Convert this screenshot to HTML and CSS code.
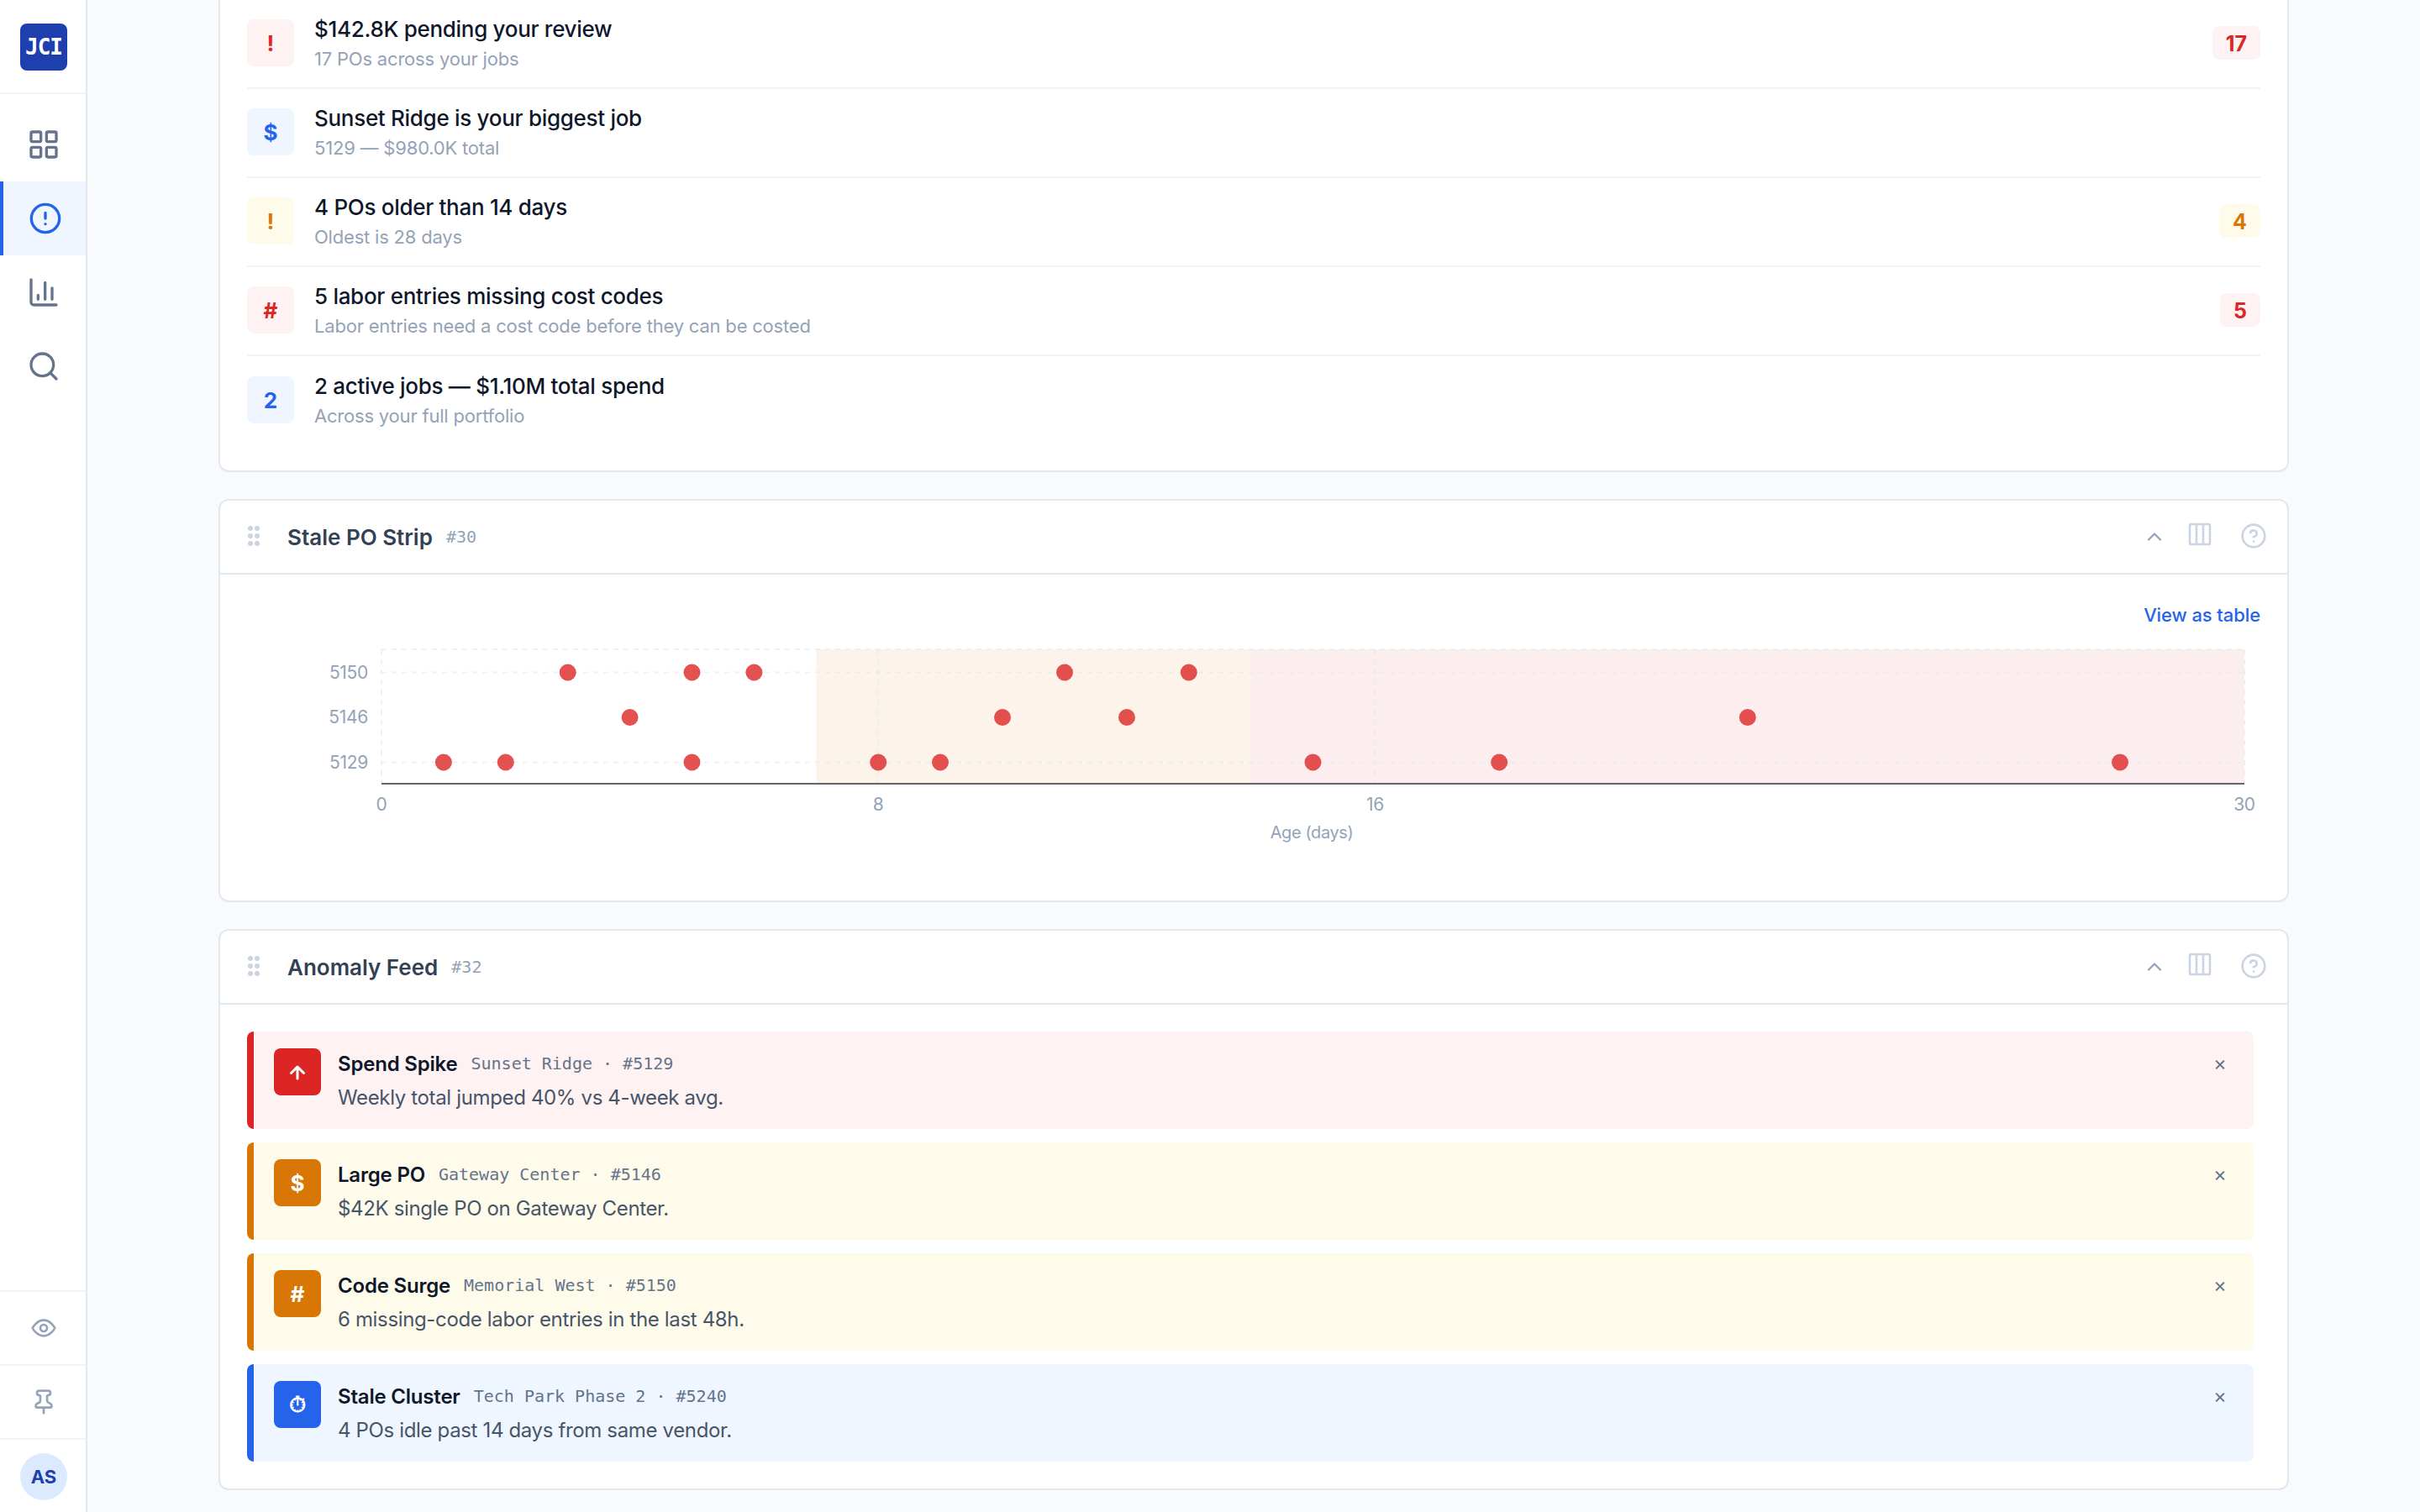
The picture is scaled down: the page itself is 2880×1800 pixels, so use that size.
FILE: index.html
```html
<!DOCTYPE html>
<html lang="en">
<head>
<meta charset="utf-8">
<title>Alerts</title>
<link rel="stylesheet" href="styles.css">
</head>
<body>
<div class="app">
  <aside class="sidebar">
    <div class="brand"><div class="logo">JCI</div></div>
    <nav class="nav">
      <a class="nav-item"><svg class="ico" viewBox="0 0 24 24"><rect x="3" y="3" width="7" height="7" rx="1"/><rect x="14" y="3" width="7" height="7" rx="1"/><rect x="3" y="14" width="7" height="7" rx="1"/><rect x="14" y="14" width="7" height="7" rx="1"/></svg></a>
      <a class="nav-item active"><svg class="ico" viewBox="0 0 24 24"><circle cx="12" cy="12" r="10"/><path d="M12 8v4M12 16h.01"/></svg></a>
      <a class="nav-item"><svg class="ico" viewBox="0 0 24 24"><path d="M3 3v16a2 2 0 0 0 2 2h16M8 17v-3M13 17V5M18 17V9"/></svg></a>
      <a class="nav-item"><svg class="ico" viewBox="0 0 24 24"><circle cx="11" cy="11" r="8"/><path d="m21 21-4.3-4.3"/></svg></a>
    </nav>
    <div class="side-foot">
      <div class="foot-item"><svg class="ico-s" viewBox="0 0 24 24"><path d="M2 12s3.6-7 10-7 10 7 10 7-3.6 7-10 7-10-7-10-7Z"/><circle cx="12" cy="12" r="3"/></svg></div>
      <div class="foot-item"><svg class="ico-s" viewBox="0 0 24 24"><path d="M12 17v5M9 10.8a2 2 0 0 1-1.1 1.8l-1.8.9A2 2 0 0 0 5 15.2V16a1 1 0 0 0 1 1h12a1 1 0 0 0 1-1v-.8a2 2 0 0 0-1.1-1.8l-1.8-.9a2 2 0 0 1-1.1-1.8V7a1 1 0 0 1 1-1 2 2 0 0 0 0-4H8a2 2 0 0 0 0 4 1 1 0 0 1 1 1Z"/></svg></div>
      <div class="foot-user"><div class="avatar">AS</div></div>
    </div>
  </aside>
  <main class="main">
    <section class="card card-top">
      <div class="insights">
        <div class="insight"><div class="chip chip-red">!</div><div class="ins-text"><div class="ins-title">$142.8K pending your review</div><div class="ins-sub">17 POs across your jobs</div></div><div class="badge badge-red">17</div></div>
        <div class="insight"><div class="chip chip-blue">$</div><div class="ins-text"><div class="ins-title">Sunset Ridge is your biggest job</div><div class="ins-sub">5129 — $980.0K total</div></div></div>
        <div class="insight"><div class="chip chip-amber">!</div><div class="ins-text"><div class="ins-title">4 POs older than 14 days</div><div class="ins-sub">Oldest is 28 days</div></div><div class="badge badge-amber">4</div></div>
        <div class="insight"><div class="chip chip-red">#</div><div class="ins-text"><div class="ins-title">5 labor entries missing cost codes</div><div class="ins-sub">Labor entries need a cost code before they can be costed</div></div><div class="badge badge-red">5</div></div>
        <div class="insight"><div class="chip chip-blue">2</div><div class="ins-text"><div class="ins-title">2 active jobs — $1.10M total spend</div><div class="ins-sub">Across your full portfolio</div></div></div>
      </div>
    </section>

    <section class="card">
      <header class="card-head">
        <span class="grip"><i></i><i></i><i></i><i></i><i></i><i></i></span>
        <h2 class="card-title">Stale PO Strip</h2><span class="card-id">#30</span>
        <div class="head-tools">
          <svg class="tool-chev" viewBox="0 0 24 24"><path d="m6 15 6-6 6 6"/></svg>
          <svg class="tool-cols" viewBox="0 0 24 24"><rect x="3" y="3" width="18" height="18" rx="1"/><path d="M9 3v18M15 3v18"/></svg>
          <svg class="tool-help" viewBox="0 0 24 24"><circle cx="12" cy="12" r="10"/><path d="M9.1 9a3 3 0 0 1 5.8 1c0 2-3 3-3 3M12 17h.01"/></svg>
        </div>
      </header>
      <div class="chart-body">
        <a class="table-link">View as table</a>
        <svg class="strip" viewBox="0 0 2217 270" width="2217" height="270">
          <rect class="band-amber" x="517.4" y="0" width="517.3" height="160"/>
          <rect class="band-red" x="1034.7" y="0" width="1182.3" height="160"/>
          <g class="grid">
            <path d="M0 0H2217M0 27.5H2217M0 134.5H2217"/>
            <path d="M0 0V160M591.2 0V160M1182.4 0V160M2217 0V160"/>
          </g>
          <path class="axis" d="M0 160H2217"/>
          <g class="labels">
            <text x="-16" y="35" class="end">5150</text>
            <text x="-16" y="88" class="end">5146</text>
            <text x="-16" y="142" class="end">5129</text>
            <text x="0" y="192" class="mid">0</text>
            <text x="591.2" y="192" class="mid">8</text>
            <text x="1182.4" y="192" class="mid">16</text>
            <text x="2217" y="192" class="mid">30</text>
            <text x="1107" y="225" class="mid age">Age (days)</text>
          </g>
          <g class="dots">
            <circle cx="221.7" cy="27.5" r="10"/><circle cx="369.5" cy="27.5" r="10"/><circle cx="443.4" cy="27.5" r="10"/><circle cx="813" cy="27.5" r="10"/><circle cx="960.8" cy="27.5" r="10"/>
            <circle cx="295.6" cy="81" r="10"/><circle cx="739" cy="81" r="10"/><circle cx="887" cy="81" r="10"/><circle cx="1625.8" cy="81" r="10"/>
            <circle cx="73.9" cy="134.5" r="10"/><circle cx="147.8" cy="134.5" r="10"/><circle cx="369.5" cy="134.5" r="10"/><circle cx="591.2" cy="134.5" r="10"/><circle cx="665" cy="134.5" r="10"/><circle cx="1108.5" cy="134.5" r="10"/><circle cx="1330.2" cy="134.5" r="10"/><circle cx="2069" cy="134.5" r="10"/>
          </g>
        </svg>
      </div>
    </section>

    <section class="card">
      <header class="card-head">
        <span class="grip"><i></i><i></i><i></i><i></i><i></i><i></i></span>
        <h2 class="card-title">Anomaly Feed</h2><span class="card-id">#32</span>
        <div class="head-tools">
          <svg class="tool-chev" viewBox="0 0 24 24"><path d="m6 15 6-6 6 6"/></svg>
          <svg class="tool-cols" viewBox="0 0 24 24"><rect x="3" y="3" width="18" height="18" rx="1"/><path d="M9 3v18M15 3v18"/></svg>
          <svg class="tool-help" viewBox="0 0 24 24"><circle cx="12" cy="12" r="10"/><path d="M9.1 9a3 3 0 0 1 5.8 1c0 2-3 3-3 3M12 17h.01"/></svg>
        </div>
      </header>
      <div class="feed">
        <article class="alert alert-red"><div class="alert-ico"><svg class="arrow" viewBox="0 0 24 24"><path d="M12 20V6M4.5 13.5 12 6l7.5 7.5"/></svg></div><div class="alert-text"><div class="alert-head"><strong>Spend Spike</strong><span class="meta">Sunset Ridge · #5129</span></div><p>Weekly total jumped 40% vs 4-week avg.</p></div><span class="close">×</span></article>
        <article class="alert alert-amber"><div class="alert-ico">$</div><div class="alert-text"><div class="alert-head"><strong>Large PO</strong><span class="meta">Gateway Center · #5146</span></div><p>$42K single PO on Gateway Center.</p></div><span class="close">×</span></article>
        <article class="alert alert-amber"><div class="alert-ico">#</div><div class="alert-text"><div class="alert-head"><strong>Code Surge</strong><span class="meta">Memorial West · #5150</span></div><p>6 missing-code labor entries in the last 48h.</p></div><span class="close">×</span></article>
        <article class="alert alert-blue"><div class="alert-ico">⏱</div><div class="alert-text"><div class="alert-head"><strong>Stale Cluster</strong><span class="meta">Tech Park Phase 2 · #5240</span></div><p>4 POs idle past 14 days from same vendor.</p></div><span class="close">×</span></article>
      </div>
    </section>
  </main>
</div>
</body>
</html>
```
FILE: styles.css
```css
* { box-sizing: border-box; }
html, body { margin: 0; height: 100%; overflow: hidden; }
body { font-family: Inter, "Noto Sans", sans-serif; background: #f8fafc; color: #0f172a; }
.app { display: flex; height: 1800px; }

.sidebar { width: 104px; flex: none; background: #fff; border-right: 2px solid #e2e8f0; display: flex; flex-direction: column; }
.brand { height: 112px; border-bottom: 2px solid #f1f5f9; display: flex; justify-content: center; padding: 28px 0 0 2px; }
.logo { width: 56px; height: 56px; border-radius: 8px; background: #1e40af; color: #fff; font: 700 26px "DejaVu Sans Mono", monospace; letter-spacing: -1px; display: flex; align-items: center; justify-content: center; }
.nav { padding-top: 16px; flex: 1; }
.nav-item { height: 88px; padding-left: 2px; display: flex; align-items: center; justify-content: center; color: #64748b; }
.nav-item.active { background: #eff6ff; border-left: 4px solid #2563eb; color: #2563eb; }
.ico { width: 40px; height: 40px; fill: none; stroke: currentColor; stroke-width: 2; stroke-linecap: round; stroke-linejoin: round; }
.side-foot { display: flex; flex-direction: column; }
.foot-item { height: 88px; padding-left: 2px; border-top: 2px solid #f1f5f9; display: flex; align-items: center; justify-content: center; color: #94a3b8; }
.ico-s { width: 32px; height: 32px; fill: none; stroke: currentColor; stroke-width: 2; stroke-linecap: round; stroke-linejoin: round; }
.foot-user { height: 88px; border-top: 2px solid #f1f5f9; display: flex; justify-content: center; padding: 16px 0 0 2px; }
.avatar { width: 56px; height: 56px; border-radius: 50%; background: #dbeafe; color: #1e40af; font-weight: 700; font-size: 22px; display: flex; align-items: center; justify-content: center; }

.main { flex: 1; min-width: 0; padding: 0 156px; display: flex; flex-direction: column; gap: 32px; }
.card { background: #fff; border: 2px solid #e2e8f0; border-radius: 12px; flex: none; }
.card-top { border-top: 0; border-radius: 0 0 12px 12px; }
.insights { padding: 0 32px 32px; }
.insight { display: flex; align-items: center; gap: 24px; height: 106px; padding-bottom: 2px; border-bottom: 2px solid #f1f5f9; }
.insight:last-child { border-bottom: 0; height: 104px; padding-bottom: 0; }
.chip { width: 56px; height: 56px; flex: none; border-radius: 8px; padding-top: 1px; display: flex; align-items: center; justify-content: center; font-weight: 700; font-size: 26px; }
.chip-red { background: #fef2f2; color: #dc2626; }
.chip-blue { background: #eff6ff; color: #2563eb; }
.chip-amber { background: #fffbeb; color: #d97706; }
.ins-text { flex: 1; }
.ins-title { font-size: 26px; line-height: 36px; font-weight: 500; color: #0f172a; letter-spacing: -0.3px; }
.ins-sub { font-size: 22px; line-height: 30px; margin-top: 2px; color: #94a3b8; letter-spacing: -0.2px; }
.badge { height: 40px; min-width: 46px; padding: 2px 16px 0; border-radius: 8px; display: flex; align-items: center; justify-content: center; font-size: 25px; font-weight: 700; }
.badge-red { background: #fef2f2; color: #dc2626; }
.badge-amber { background: #fffbeb; color: #d97706; }

.card-head { height: 88px; border-bottom: 2px solid #e2e8f0; display: flex; align-items: center; padding: 0 24px 0 33px; }
.grip { width: 14px; display: grid; grid-template-columns: 6px 6px; gap: 3px 2px; margin-right: 33px; margin-top: -2px; }
.grip i { width: 6px; height: 6px; border-radius: 50%; background: #cbd5e1; }
.card-title { margin: 0; font-size: 26px; font-weight: 600; color: #334155; }
.card-id { margin-left: 16px; font: 20px "DejaVu Sans Mono", monospace; color: #94a3b8; }
.head-tools { margin-left: auto; display: flex; align-items: center; }
.tool-chev { width: 28px; height: 28px; fill: none; stroke: #94a3b8; stroke-width: 2; stroke-linecap: round; stroke-linejoin: round; margin-right: 24px; }
.tool-cols { width: 32px; height: 32px; fill: none; stroke: #cbd5e1; stroke-width: 2; margin-right: 32px; margin-top: -6px; }
.tool-help { width: 32px; height: 32px; fill: none; stroke: #cbd5e1; stroke-width: 2; stroke-linecap: round; margin-top: -2px; }

.chart-body { padding: 34px 32px 0; height: 388px; }
.table-link { display: block; text-align: right; font-size: 22px; line-height: 28px; font-weight: 500; color: #2563eb; letter-spacing: -0.1px; }
.strip { display: block; margin: 27px 0 0 160px; overflow: visible; }
.band-amber { fill: #d97706; fill-opacity: .08; }
.band-red { fill: #dc2626; fill-opacity: .08; }
.grid path { fill: none; stroke: #e2e8f0; stroke-opacity: .6; stroke-width: 2; stroke-dasharray: 6 6; }
.axis { stroke: #666; stroke-width: 2; fill: none; }
.labels text { font-size: 21px; fill: #94a3b8; letter-spacing: -0.3px; }
.labels .age { font-size: 20px; letter-spacing: -0.4px; }
.labels .end { text-anchor: end; }
.labels .mid { text-anchor: middle; }
.dots circle { fill: #dc2626; fill-opacity: .8; }

.feed { padding: 32px; display: flex; flex-direction: column; gap: 16px; }
.alert { height: 116px; margin-right: 8px; border-left: 8px solid; border-radius: 8px; padding: 20px 24px; display: flex; gap: 20px; position: relative; }
.alert-red { background: #fef2f2; border-color: #dc2626; }
.alert-amber { background: #fffbeb; border-color: #d97706; }
.alert-blue { background: #eff6ff; border-color: #2563eb; }
.alert-ico { width: 56px; height: 56px; flex: none; border-radius: 8px; color: #fff; font-size: 26px; font-weight: 700; display: flex; align-items: center; justify-content: center; }
.alert-red .alert-ico { background: #dc2626; }
.alert-amber .alert-ico { background: #d97706; }
.alert-blue .alert-ico { background: #2563eb; }
.arrow { width: 24px; height: 24px; fill: none; stroke: #fff; stroke-width: 3; stroke-linecap: round; stroke-linejoin: round; }
.alert-text { flex: 1; }
.alert-head { display: flex; align-items: center; gap: 16px; height: 36px; }
.alert-head strong { font-size: 24px; font-weight: 600; color: #0f172a; letter-spacing: -0.2px; }
.meta { font: 20px "DejaVu Sans Mono", monospace; color: #64748b; }
.alert p { margin: 5px 0 0; font-size: 24px; line-height: 36px; color: #475569; letter-spacing: -0.35px; }
.close { position: absolute; right: 32px; top: 22px; font-size: 24px; line-height: 32px; color: #64748b; }
```
